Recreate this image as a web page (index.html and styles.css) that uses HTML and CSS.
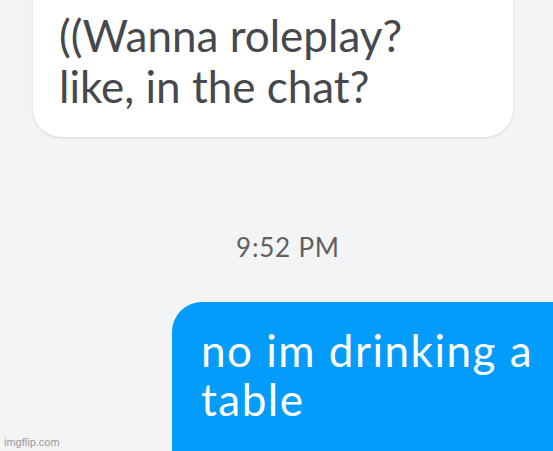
FILE: index.html
```html
<!DOCTYPE html>
<html lang="en">
<head>
  <meta charset="UTF-8" />
  <title>Chat</title>
  <link rel="stylesheet" href="styles.css">
</head>
<body>

<div class="chat">
  <div class="row them">
    <div class="bubble in">((Wanna roleplay?<br>like, in the chat?</div>
  </div>

  <div class="stamp">9:52 PM</div>

  <div class="row me">
    <div class="bubble out">no im drinking a<br>table</div>
  </div>
</div>

<div class="mark">imgflip.com</div>

</body>
</html>
```

FILE: styles.css
```css
* { box-sizing: border-box; margin: 0; padding: 0; }
html, body {
  width: 100%;
  height: 100%;
  overflow: hidden;
  background: #f3f4f6;
  font-family: "Lato", "Open Sans", sans-serif;
}

.chat {
  display: flex;
  flex-direction: column;
  margin-top: -30px;
}

.row { display: flex; }
.them { padding-left: 33px; }
.me { justify-content: flex-end; margin-right: -60px; margin-top: 40px; }

.bubble {
  font-size: 44px;
}

.in {
  width: 480px;
  background: #fff;
  color: #46484e;
  line-height: 51px;
  border-radius: 28px;
  padding: 40px 20px 25px 26px;
  box-shadow: 0 1px 3px rgba(0,0,0,0.12);
}

.out {
  width: 441px;
  height: 200px;
  background: #039cfb;
  color: #fff;
  line-height: 49px;
  letter-spacing: 1.5px;
  border-radius: 30px;
  padding: 24px 30px 0 29px;
}

.stamp {
  margin-top: 95px;
  padding-left: 236px;
  font-size: 26px;
  letter-spacing: 0.8px;
  line-height: 30px;
  color: #606060;
}

.mark {
  position: absolute;
  left: 4px;
  bottom: 3px;
  font-family: "Liberation Sans", sans-serif;
  font-size: 11px;
  color: #999;
}
```
